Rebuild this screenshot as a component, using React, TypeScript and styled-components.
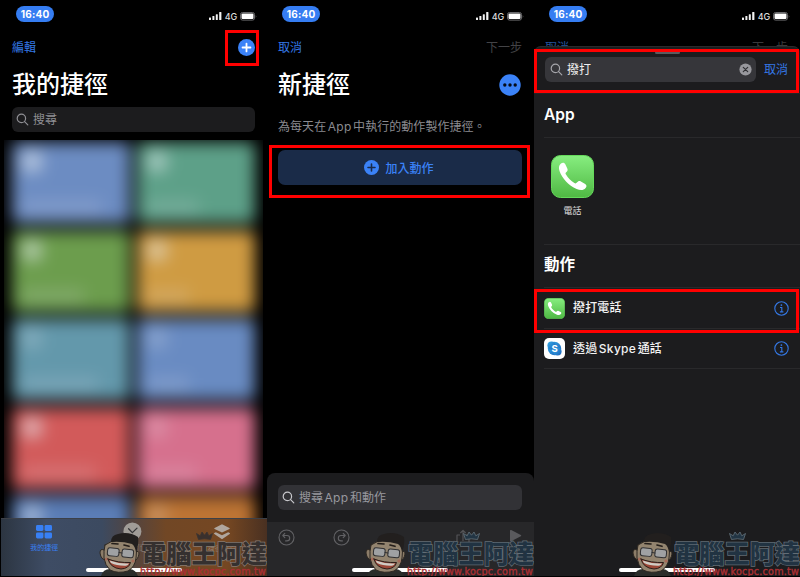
import styled, { createGlobalStyle } from "styled-components"

const App = () => {
    return (
        <>
            <GlobalStyle />
            <Board>
                <Phone>
                    <StatusBar />
                    <Nav>
                        <NavText>編輯</NavText>
                        <PlusIcon size={17} cross="#fff" />
                    </Nav>
                    <TitleRow>我的捷徑</TitleRow>
                    <SearchField $bg="#1c1c1e" $color="#8f8f94" $top={4}>
                        <SearchIcon />
                        搜尋
                    </SearchField>
                    <Library>
                        <Cards>
                            {cards.map((card, i) => (
                                <Card key={i} $color={card.color}>
                                    <CardGlyph $strength={card.glyph} />
                                    <CardLabel $width={card.label} />
                                </Card>
                            ))}
                        </Cards>
                    </Library>
                    <TabBar>
                        <Tab $color="#3880f5">
                            <GridIcon />
                            我的捷徑
                        </Tab>
                        <Tab $color="#77706a">
                            <ClockIcon />
                            自動化
                        </Tab>
                        <Tab $color="#8f7f72">
                            <LayersIcon />
                            捷徑中心
                        </Tab>
                    </TabBar>
                    <Branding warm />
                    <Mark $x={224} $y={30} $w={34} $h={36} />
                </Phone>

                <Phone>
                    <StatusBar />
                    <Nav>
                        <NavText>取消</NavText>
                        <NavText $color="#434346">下一步</NavText>
                    </Nav>
                    <TitleRow>
                        新捷徑
                        <MoreIcon />
                    </TitleRow>
                    <Description>
                        為每天在<Latin>App</Latin>中執行的動作製作捷徑。
                    </Description>
                    <AddButton>
                        <PlusIcon size={15} cross="#1a2b48" />
                        加入動作
                    </AddButton>
                    <Spacer />
                    <Drawer>
                        <SearchField $bg="#323236" $color="#98989e" $top={0}>
                            <SearchIcon color="#c8c8cc" />
                            <span>
                                搜尋<Latin>App</Latin>和動作
                            </span>
                        </SearchField>
                    </Drawer>
                    <Toolbar>
                        <TurnIcon />
                        <TurnIcon flip />
                        <ToolGap />
                        <ShareIcon />
                        <PlayIcon />
                    </Toolbar>
                    <Branding />
                    <Mark $x={2} $y={145} $w={261} $h={53} />
                </Phone>

                <Phone>
                    <Behind>
                        <StatusBar />
                        <Nav>
                            <NavText $color="#24549c">取消</NavText>
                            <NavText $color="#39393b">下一步</NavText>
                        </Nav>
                    </Behind>
                    <Sheet>
                        <Handle />
                        <SearchRow>
                            <SearchInput>
                                <SearchIcon color="#a5a5aa" />
                                <Query>撥打</Query>
                                <ClearIcon />
                            </SearchInput>
                            <NavText>取消</NavText>
                        </SearchRow>
                        <SectionTitle>App</SectionTitle>
                        <AppArea>
                            <AppTile>
                                <PhoneAppIcon size={43} />
                                電話
                            </AppTile>
                        </AppArea>
                        <SectionTitle>動作</SectionTitle>
                        <ActionRow>
                            <PhoneAppIcon size={21} />
                            <ActionName>撥打電話</ActionName>
                            <InfoIcon />
                        </ActionRow>
                        <ActionRow>
                            <SkypeIcon />
                            <ActionName>
                                透過<Latin>Skype</Latin>通話
                            </ActionName>
                            <InfoIcon />
                        </ActionRow>
                    </Sheet>
                    <Branding />
                    <Mark $x={0} $y={49} $w={265} $h={44} />
                    <Mark $x={0} $y={289} $w={265} $h={44} />
                </Phone>
            </Board>
        </>
    )
}

const cards = [
    { color: "#6c8cc2", glyph: 0.5, label: 80 },
    { color: "#5da088", glyph: 0.42, label: 52 },
    { color: "#6c9d4d", glyph: 0.46, label: 62 },
    { color: "#cf9b42", glyph: 0.42, label: 42 },
    { color: "#6398ab", glyph: 0.14, label: 76 },
    { color: "#698bc2", glyph: 0.14, label: 42 },
    { color: "#d25a5a", glyph: 0.5, label: 74 },
    { color: "#d6708d", glyph: 0.14, label: 50 },
    { color: "#5b7db6", glyph: 0.42, label: 60 },
    { color: "#bd7434", glyph: 0.16, label: 60 },
]

const StatusBar = () => (
    <Status>
        <Time>16:40</Time>
        <Signals>
            <svg width="13" height="8" viewBox="0 0 13 8" fill="#f2f2f2">
                <rect x="0" y="5.5" width="2" height="2.5" rx=".5" />
                <rect x="3.4" y="4" width="2" height="4" rx=".5" />
                <rect x="6.8" y="2.2" width="2" height="5.8" rx=".5" />
                <rect x="10.2" y="0" width="2.2" height="8" rx=".5" />
            </svg>
            <span>4G</span>
            <svg width="17" height="9" viewBox="0 0 17 9">
                <rect x=".5" y=".5" width="14" height="7.6" rx="2" fill="none" stroke="#68686b" />
                <rect x="1.5" y="1.6" width="12" height="5.4" rx="1" fill="#fff" />
                <path d="M15.8 3v3q1-1.5 0-3" fill="#88888a" />
            </svg>
        </Signals>
    </Status>
)

const PlusIcon = ({ size, cross }: { size: number; cross: string }) => (
    <svg width={size} height={size} viewBox="0 0 18 18">
        <circle cx="9" cy="9" r="9" fill="#3b82f7" />
        <path d="M9 4.8v8.4M4.8 9h8.4" stroke={cross} strokeWidth="1.9" strokeLinecap="round" />
    </svg>
)

const SearchIcon = ({ color = "#8f8f94" }: { color?: string }) => (
    <svg width="13" height="13" viewBox="0 0 13 13" fill="none" stroke={color} strokeWidth="1.2" strokeLinecap="round">
        <circle cx="5.4" cy="5.4" r="4.2" />
        <path d="M8.6 8.6l3.2 3.2" />
    </svg>
)

const MoreIcon = () => (
    <svg width="22" height="22" viewBox="0 0 22 22">
        <circle cx="11" cy="11" r="10.7" fill="#3b82f7" />
        <g fill="#050b18">
            <circle cx="5.8" cy="11" r="1.7" />
            <circle cx="11" cy="11" r="1.7" />
            <circle cx="16.2" cy="11" r="1.7" />
        </g>
    </svg>
)

const GridIcon = () => (
    <svg width="18" height="16" viewBox="0 0 18 16" fill="#3880f5">
        <rect x="1" y="1" width="7.4" height="6" rx="1.4" />
        <rect x="9.6" y="1" width="7.4" height="6" rx="1.4" />
        <rect x="1" y="8.4" width="7.4" height="6" rx="1.4" />
        <rect x="9.6" y="8.4" width="7.4" height="6" rx="1.4" />
    </svg>
)

const ClockIcon = () => (
    <svg width="20" height="16" viewBox="0 0 20 16" overflow="visible">
        <circle cx="9.4" cy="7.4" r="9" fill="#a09c97" />
        <path d="M5.6 4.7l3.8 3.9L14 4.1" fill="none" stroke="#363638" strokeWidth="1.3" strokeLinecap="round" />
    </svg>
)

const LayersIcon = () => (
    <svg width="18" height="17" viewBox="0 0 18 17" fill="#b0a69d">
        <path d="M9 .2l7.4 3.7q.9.5 0 1L9 8.600 1.600 4.900q-.9-.5 0-1z" />
        <path d="M2.800 8.200L9 11.200l6.200-3 1.500.9q.7.5 0 1L9 15.200 1.300 10.100q-.7-.5 0-1z" />
    </svg>
)

const TurnIcon = ({ flip }: { flip?: boolean }) => (
    <svg width="17" height="17" viewBox="0 0 17 17" fill="none" stroke="#626265" strokeWidth="1.1" strokeLinecap="round" strokeLinejoin="round">
        <circle cx="8.5" cy="8.5" r="7.5" />
        <g transform={flip ? "translate(17 0) scale(-1 1)" : undefined}>
            <path d="M6.8 4.4L4.8 6.5l2 2.1M5 6.5h4a2.7 2.7 0 0 1 0 5.4H7.6" />
        </g>
    </svg>
)

const ShareIcon = () => (
    <svg width="16" height="18" viewBox="0 0 16 18" fill="none" stroke="#535356" strokeWidth="1.2" strokeLinejoin="round">
        <path d="M5 6H2v9.5h12V6h-3M8 12V1.5M5.4 4L8 1.3 10.6 4" />
    </svg>
)

const PlayIcon = () => (
    <svg width="13" height="14" viewBox="0 0 13 14">
        <path d="M1 1.8q0-1.300 1.200-.7l9.600 5q1 .6 0 1.200l-9.600 5Q1 12.900 1 11.600z" fill="#5a5a5d" />
    </svg>
)

const ClearIcon = () => (
    <svg width="13" height="13" viewBox="0 0 13 13">
        <circle cx="6.5" cy="6.5" r="6.1" fill="#98989d" />
        <path d="M4.3 4.3l4.4 4.4M8.7 4.3L4.3 8.7" stroke="#303034" strokeWidth="1.2" strokeLinecap="round" />
    </svg>
)

const PhoneAppIcon = ({ size }: { size: number }) => (
    <svg width={size} height={size} viewBox="0 0 43 43">
        <defs>
            <linearGradient id={`call${size}`} x1="0" y1="0" x2="0" y2="1">
                <stop offset="0" stopColor="#87ee80" />
                <stop offset="1" stopColor="#4fb843" />
            </linearGradient>
        </defs>
        <rect x=".5" y=".5" width="42" height="42" rx="9" fill={`url(#call${size})`} stroke="#65d95b" />
        <path
            d="M9.7 8.8c1.700-1.600 3.500-1.600 4.600.4l2 4.200c.8 1.700.2 2.700-1.100 3.800-.8.7-.8 1.400-.2 2.400 2 3.500 4.900 6.200 8.400 8.400 1 .6 1.800.5 2.500-.4 1.200-1.500 2.300-2 4-1.200l4.300 2.500c1.700 1.100 1.600 2.600.4 4.100-2 2.500-5.200 2.600-9 1C17.500 30.500 11.200 23.500 8.600 16.300c-1.100-3-.9-5.700 1.100-7.500z"
            fill="#fff"
        />
    </svg>
)

const SkypeIcon = () => (
    <SkypeTile>
        <svg width="15" height="15" viewBox="0 0 15 15">
            <defs>
                <linearGradient id="skype" x1="0" y1="0" x2="1" y2="1">
                    <stop offset="0" stopColor="#36aee9" />
                    <stop offset="1" stopColor="#1b5fb8" />
                </linearGradient>
            </defs>
            <g fill="url(#skype)">
                <circle cx="7.5" cy="7.5" r="6.7" />
                <circle cx="4.5" cy="4.5" r="4.1" />
                <circle cx="10.5" cy="10.5" r="4.1" />
            </g>
            <text x="7.5" y="11" textAnchor="middle" fontFamily="Inter, sans-serif" fontWeight="700" fontSize="9.5" fill="#fff">S</text>
        </svg>
    </SkypeTile>
)

const InfoIcon = () => (
    <svg width="15" height="15" viewBox="0 0 15 15" fill="none" stroke="#3478e5" strokeWidth="1.1">
        <circle cx="7.5" cy="7.5" r="6.7" />
        <path d="M6 6.5h1.8v4.2M5.900 10.900h3.500" />
        <circle cx="7.4" cy="4.1" r=".9" fill="#3478e5" stroke="none" />
    </svg>
)

const Mascot = () => (
    <svg width="44" height="45" viewBox="0 0 44 45" strokeLinecap="round" strokeLinejoin="round">
        <path d="M2 45q2-7 9-7h20q6 1 8 7z" fill="#2a2d2a" />
        <path d="M5 19Q1 17 1 22q1 7 6 7M36 21q4-2 4 2-1 6-5 7" fill="#8c7d69" stroke="#2e2822" />
        <path d="M6 14Q18 5 37 12q1 8 0 15-1 9-8 13-10 3-18-1-5-5-6-12-.5-7 1-13z" fill="#93846f" stroke="#2e2822" />
        <path d="M12 11Q12 4 19 3q11-3 20 3 1 7-2 15-1-6-4-8-10-3-21-2z" fill="#221f1e" />
        <path d="M13 12.500l6 .5M25 14l5 1.300" stroke="#241e1a" strokeWidth="1.700" />
        <circle cx="7.500" cy="28" r="1.600" fill="#a86a59" />
        <circle cx="34" cy="30" r="1.600" fill="#a86a59" />
        <g fill="#9fa1a3" stroke="#303032">
            <rect x="8.500" y="17" width="11.500" height="8" rx="2.200" transform="rotate(6 14 21)" />
            <rect x="23" y="18.500" width="11.500" height="8" rx="2.200" transform="rotate(6 29 22)" />
            <path d="M20 21.500l3 .5" />
        </g>
        <path d="M9 28q10 4 22.500 3.500-1.500 6-9.500 6.500-11-1-13-10z" fill="#9b4636" stroke="#2b1d19" />
        <path d="M10.500 29.500q10 3.500 19.500 3-1 1.700-3 2.200-9 .3-15-2.700z" fill="#cfccc5" />
    </svg>
)

const Branding = ({ warm }: { warm?: boolean }) => (
    <Footer>
        <HomeBar />
        <MascotSlot>
            <Mascot />
        </MascotSlot>
        <Crown>
            <svg width="19" height="11" viewBox="0 0 19 11">
                <path
                    d="M3.500 9.500L1.500 3.500l3.700 2.300L7 2l2.500 3.200L12 2l1.800 3.800 3.700-2.300-2 6q-6-1.500-12 0z"
                    fill={warm ? "#39302d" : "#223544"}
                    stroke={warm ? "#3b3431" : "#65727b"}
                    strokeWidth=".8"
                />
            </svg>
        </Crown>
        <BrandName $warm={warm}>電腦王阿達</BrandName>
        <BrandUrl>http://www.kocpc.com.tw</BrandUrl>
    </Footer>
)

const GlobalStyle = createGlobalStyle`
    * {
        box-sizing: border-box;
    }

    body {
        margin: 0;
        background: #000;
        overflow: hidden;
        font-family: Inter, "Noto Sans CJK TC", sans-serif;
        font-size: 12px;
        line-height: 1;
    }

    svg {
        display: block;
        flex: none;
    }
`

const Board = styled.main`
    display: grid;
    grid-template-columns: 266px 267px 266px;
    height: 577px;
    padding: 0 0 1px 1px;
    background: #000;
`

const Phone = styled.section`
    position: relative;
    display: flex;
    flex-direction: column;
    min-width: 0;
    height: 576px;
    overflow: hidden;
`

const Status = styled.div`
    display: flex;
    flex: none;
    justify-content: space-between;
    height: 32px;
    padding: 6px 10px 0 15px;
`

const Time = styled.div`
    width: 38px;
    height: 16px;
    border-radius: 8px;
    background: #357df2;
    color: #fff;
    font-size: 10px;
    font-weight: 700;
    letter-spacing: .2px;
    line-height: 16px;
    text-align: center;
`

const Signals = styled.div`
    display: flex;
    align-items: center;
    gap: 3px;
    height: 20px;
    color: #ddd;
    font-size: 9px;
    font-weight: 500;
    letter-spacing: -.2px;
`

const Nav = styled.div`
    display: flex;
    flex: none;
    align-items: center;
    justify-content: space-between;
    height: 31px;
    padding: 0 12px 0 11px;
`

const NavText = styled.span<{ $color?: string }>`
    color: ${props => props.$color || "#3478e5"};
    white-space: nowrap;
`

const TitleRow = styled.h1`
    display: flex;
    flex: none;
    align-items: center;
    justify-content: space-between;
    height: 40px;
    margin: 0;
    padding: 4px 13px 0 11px;
    color: #fff;
    font-size: 24px;
    font-weight: 500;
    line-height: 42px;
`

const SearchField = styled.div<{ $bg: string; $color: string; $top: number }>`
    display: flex;
    flex: none;
    align-items: center;
    gap: 4px;
    height: 25px;
    margin: ${props => props.$top}px 12px 0 11px;
    padding: 0 4px;
    border-radius: 6px;
    background: ${props => props.$bg};
    color: ${props => props.$color};
`

const Latin = styled.span`
    margin: 0 1.5px;
    letter-spacing: .3px;
`

const Library = styled.div`
    flex: 1;
    min-height: 0;
    margin: 8px 4px 0 3px;
    overflow: hidden;
`

const Cards = styled.div`
    display: grid;
    grid-template-columns: 1fr 1fr;
    grid-auto-rows: 81px;
    gap: 7.5px;
    padding: 2px 8px 0;
    filter: blur(8px);
`

const Card = styled.div<{ $color: string }>`
    display: flex;
    flex-direction: column;
    justify-content: space-between;
    padding: 9px 10px 9px;
    border-radius: 5px;
    background: ${props => props.$color};
`

const CardGlyph = styled.div<{ $strength: number }>`
    width: 20px;
    height: 21px;
    border-radius: 5px;
    background: rgb(230 235 240 / ${props => props.$strength * 100 + 8}%);
`

const CardLabel = styled.div<{ $width: number }>`
    width: ${props => props.$width}px;
    height: 14px;
    background: rgb(230 230 240 / 18%);
`

const TabBar = styled.div`
    display: grid;
    flex: none;
    grid-template-columns: repeat(3, 1fr);
    height: 58px;
    border-top: 1px solid #3c4048;
    background: linear-gradient(90deg, #2c3541, #3e4c64 17%, #3c4a60 38%, #54443e 50%, #714725 62%, #754722 85%, #493021);
`

const Tab = styled.div<{ $color: string }>`
    display: flex;
    flex-direction: column;
    align-items: center;
    gap: 4px;
    padding-top: 5px;
    padding-right: 2px;
    color: ${props => props.$color};
    font-size: 7px;
`

const Description = styled.p`
    flex: none;
    height: 47px;
    margin: 0;
    padding: 15px 0 0 11px;
    color: #8b8b90;
    letter-spacing: .05px;
    line-height: 17px;
    white-space: nowrap;
`

const AddButton = styled.button`
    display: flex;
    flex: none;
    align-items: center;
    justify-content: center;
    gap: 6px;
    height: 35px;
    margin: 0 12px 0 11px;
    padding: 0 2px 0 0;
    border: 0;
    border-radius: 7px;
    background: #1a2b48;
    color: #3b82f7;
    font: 500 12px Inter, "Noto Sans CJK TC", sans-serif;
`

const Spacer = styled.div`
    flex: 1;
`

const Drawer = styled.div`
    flex: none;
    height: 49px;
    padding-top: 12px;
    border-radius: 8px 8px 0 0;
    background: #1c1c1e;
`

const Toolbar = styled.div`
    display: flex;
    flex: none;
    align-items: flex-start;
    gap: 38px;
    height: 54px;
    padding: 7px 12px 0 11px;
    background: #272729;
`

const ToolGap = styled.div`
    flex: 1;
`

const Behind = styled.div`
    flex: none;
    height: 46px;
    overflow: hidden;
`

const Sheet = styled.div`
    flex: 1;
    border-top: 1px solid #2a2a2c;
    border-radius: 7px 7px 0 0;
    background: #1c1c1e;
`

const Handle = styled.div`
    width: 25px;
    height: 3px;
    margin: 4px auto 0;
    border-radius: 2px;
    background: #5b5b5f;
`

const SearchRow = styled.div`
    display: flex;
    align-items: center;
    gap: 8px;
    height: 40px;
    padding: 0 12px 8px 11px;
    border-bottom: 1px solid #242426;
`

const SearchInput = styled.div`
    display: flex;
    flex: 1;
    align-items: center;
    gap: 4px;
    height: 25px;
    padding: 0 4px 0 5px;
    border-radius: 6px;
    background: #36363a;
`

const Query = styled.span`
    flex: 1;
    color: #eee;
`

const SectionTitle = styled.h2`
    display: flex;
    align-items: center;
    height: 43.5px;
    margin: 0 0 0 10px;
    padding-bottom: 2px;
    border-bottom: 1px solid #29292b;
    color: #fff;
    font-size: 15.5px;
    font-weight: 600;
`

const AppArea = styled.div`
    height: 107px;
    margin-left: 10px;
    padding: 17.5px 0 0 7px;
    border-bottom: 1px solid #29292b;
`

const AppTile = styled.div`
    display: flex;
    flex-direction: column;
    align-items: center;
    gap: 8px;
    width: 43px;
    color: #ddd;
    font-size: 9px;
`

const ActionRow = styled.div`
    display: flex;
    align-items: center;
    gap: 8px;
    height: 40.5px;
    margin-left: 10px;
    padding: 1px 11px 0 0;
    border-bottom: 1px solid #29292b;
`

const ActionName = styled.span`
    flex: 1;
    color: #f2f2f2;
    font-weight: 500;
    letter-spacing: .15px;
    line-height: 16px;
`

const SkypeTile = styled.div`
    display: grid;
    place-items: center;
    width: 21px;
    height: 21px;
    border-radius: 5px;
    background: #fff;
`

// red outline laid over the control the reader should tap
const Mark = styled.div<{ $x: number; $y: number; $w: number; $h: number }>`
    position: absolute;
    top: ${props => props.$y}px;
    left: ${props => props.$x}px;
    width: ${props => props.$w}px;
    height: ${props => props.$h}px;
    border: 3px solid #f00;
`

const Footer = styled.div`
    position: absolute;
    right: 0;
    bottom: 0;
    width: 100%;
    height: 48px;
`

const HomeBar = styled.div`
    position: absolute;
    bottom: 4px;
    left: 85px;
    width: 96px;
    height: 4px;
    border-radius: 2px;
    background: #fff;
`

const MascotSlot = styled.div`
    position: absolute;
    bottom: 0;
    left: 98px;
`

const Crown = styled.div`
    position: absolute;
    top: 2px;
    right: 53px;
`

const BrandName = styled.div<{ $warm?: boolean }>`
    position: absolute;
    right: 0;
    bottom: 11px;
    color: ${props => (props.$warm ? "#35302f" : "#213342")};
    font-family: "Noto Sans CJK TC", sans-serif;
    font-size: 25.2px;
    font-weight: 900;
    line-height: 26px;
    white-space: nowrap;
    -webkit-text-stroke: 1.4px ${props => (props.$warm ? "#847a72" : "#626d75")};
    paint-order: stroke fill;
`

const BrandUrl = styled.div`
    position: absolute;
    right: 0;
    bottom: -1px;
    width: 127px;
    color: #a92f33;
    font-family: "DejaVu Sans", sans-serif;
    font-size: 9.6px;
    letter-spacing: .22px;
    line-height: 10px;
    white-space: nowrap;
    -webkit-text-stroke: .4px #a92f33;
`

export default App
